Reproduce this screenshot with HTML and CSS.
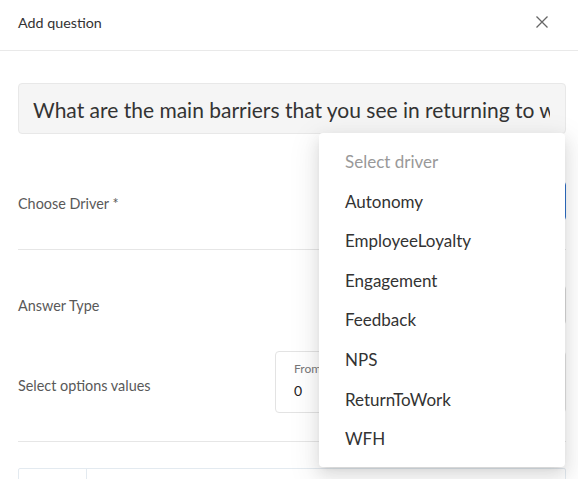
FILE: index.html
```html
<!DOCTYPE html>
<html>
<head>
<meta charset="utf-8">
<link rel="stylesheet" href="styles.css">
</head>
<body>
<div class="modal">
  <div class="header">
    <span class="title">Add question</span>
    <svg class="close" width="14" height="14" viewBox="0 0 14 14"><path d="M1.5 1.5 L12.5 12.5 M12.5 1.5 L1.5 12.5" stroke="#666" stroke-width="1.3" fill="none"/></svg>
  </div>
  <div class="body">
    <div class="question"><div class="question-text">What are the main barriers that you see in returning to work after the pandemic?</div></div>
    <div class="row row-driver">
      <div class="label">Choose Driver *</div>
      <div class="select focused"></div>
    </div>
    <div class="row row-type">
      <div class="label">Answer Type</div>
      <div class="select"></div>
    </div>
    <div class="row row-options">
      <div class="label">Select options values</div>
      <div class="range">
        <div class="num"><div class="num-label">From</div><div class="num-val">0</div></div>
        <div class="num"></div>
      </div>
    </div>
    <div class="table">
      <div class="cell first"></div>
      <div class="cell"></div>
    </div>
  </div>
  <div class="dropdown">
    <div class="item placeholder">Select driver</div>
    <div class="item">Autonomy</div>
    <div class="item">EmployeeLoyalty</div>
    <div class="item">Engagement</div>
    <div class="item">Feedback</div>
    <div class="item">NPS</div>
    <div class="item">ReturnToWork</div>
    <div class="item">WFH</div>
  </div>
</div>
</body>
</html>
```

FILE: styles.css
```css
* { box-sizing: border-box; }
html, body { margin: 0; padding: 0; background: #fff; }
body {
  font-family: "Lato", "Open Sans", sans-serif;
  color: #333;
  width: 578px;
  height: 479px;
  overflow: hidden;
}
.modal { position: relative; width: 578px; height: 479px; overflow: hidden; }
.header {
  height: 51px;
  border-bottom: 1px solid #e9e9e9;
  display: flex;
  align-items: center;
  justify-content: space-between;
  padding: 0 29px 6px 18px;
}
.title { font-size: 14.3px; color: #333; }
.close { display: block; }
.body { padding: 32px 12px 0 18px; }
.question {
  height: 51px;
  background: #f5f5f5;
  border: 1px solid #e8e8e8;
  border-radius: 4px;
  padding: 0 15px 0 14px;
}
.question-text {
  font-size: 21px;
  line-height: 52px;
  white-space: nowrap;
  overflow: hidden;
  color: #333;
}
.row {
  display: flex;
  justify-content: space-between;
  align-items: center;
}
.label { font-size: 14.4px; color: #595959; }
.select {
  width: 247px;
  height: 40px;
  border: 1px solid #d9d9d9;
  border-radius: 4px;
}
.select.focused { border-color: #2f6fc7; }
.row-driver {
  margin-top: 47px;
  padding-bottom: 28px;
  border-bottom: 1px solid #e6e6e6;
}
.row-driver .label { padding-top: 4px; }
.row-type { padding-top: 35px; }
.row-options {
  padding-top: 26px;
  padding-bottom: 28px;
  border-bottom: 1px solid #e6e6e6;
}
.row-options .label { padding-top: 6px; }
.range { display: flex; gap: 10px; width: 291px; }
.num {
  flex: 1;
  height: 62px;
  border: 1px solid #e3e3e3;
  border-radius: 4px;
  padding: 9px 0 0 18px;
}
.num-label { font-size: 12px; color: #777; line-height: 16px; }
.num-val { font-size: 14px; color: #222; line-height: 22px; margin-top: 3px; }
.table {
  margin-top: 26px;
  display: flex;
  height: 40px;
  border: 1px solid #e3eaf0;
  border-radius: 2px;
}
.cell { flex: 1; }
.cell.first { flex: 0 0 68px; border-right: 1px solid #e3eaf0; }
.dropdown {
  position: absolute;
  left: 319px;
  top: 133px;
  width: 246px;
  height: 334px;
  background: #fff;
  border-radius: 4px;
  padding: 9px 0 8px;
  box-shadow: 0 3px 6px -4px rgba(0,0,0,0.12), 0 6px 16px 0 rgba(0,0,0,0.10), 0 9px 28px 8px rgba(0,0,0,0.06);
}
.item {
  height: 39.6px;
  line-height: 39.6px;
  padding-left: 26px;
  font-size: 17px;
  color: #333;
}
.item.placeholder { color: #999; }
```
